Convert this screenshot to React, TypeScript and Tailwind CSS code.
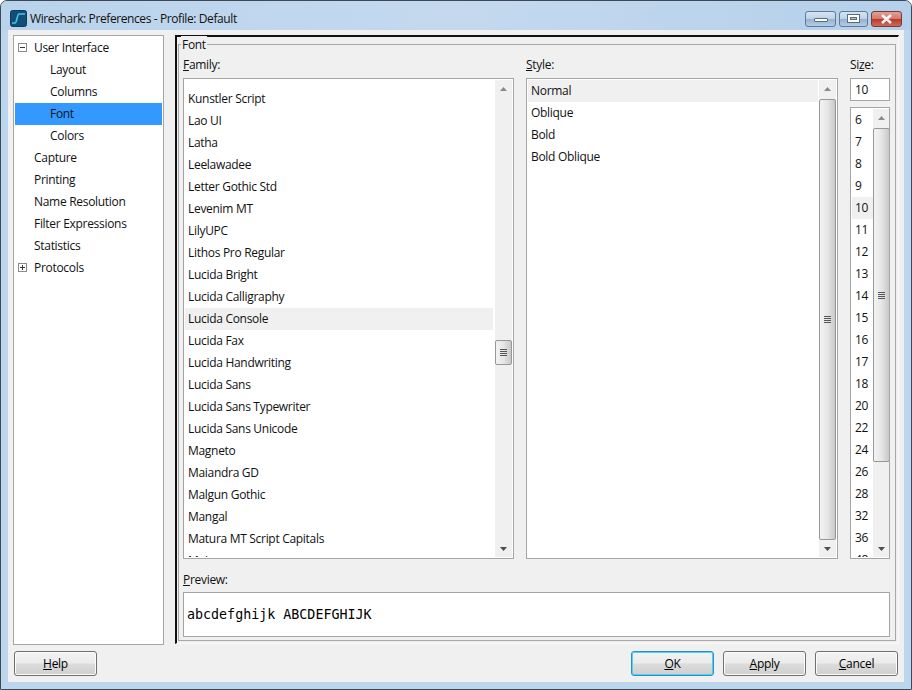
import type { ReactNode } from 'react';

const treeItems = [
  { label: 'User Interface', indent: 'pl-[19px]', box: 'minus' },
  { label: 'Layout', indent: 'pl-[35px]' },
  { label: 'Columns', indent: 'pl-[35px]' },
  { label: 'Font', indent: 'pl-[35px]', active: true },
  { label: 'Colors', indent: 'pl-[35px]' },
  { label: 'Capture', indent: 'pl-[19px]' },
  { label: 'Printing', indent: 'pl-[19px]' },
  { label: 'Name Resolution', indent: 'pl-[19px]' },
  { label: 'Filter Expressions', indent: 'pl-[19px]' },
  { label: 'Statistics', indent: 'pl-[19px]' },
  { label: 'Protocols', indent: 'pl-[19px]', box: 'plus' },
];

const families = [
  'Kunstler Script', 'Lao UI', 'Latha', 'Leelawadee', 'Letter Gothic Std', 'Levenim MT', 'LilyUPC',
  'Lithos Pro Regular', 'Lucida Bright', 'Lucida Calligraphy', 'Lucida Console', 'Lucida Fax',
  'Lucida Handwriting', 'Lucida Sans', 'Lucida Sans Typewriter', 'Lucida Sans Unicode', 'Magneto',
  'Maiandra GD', 'Malgun Gothic', 'Mangal', 'Matura MT Script Capitals', 'Meiryo',
];

const styles = ['Normal', 'Oblique', 'Bold', 'Bold Oblique'];
const sizes = ['6', '7', '8', '9', '10', '11', '12', '13', '14', '15', '16', '17', '18', '20', '22', '24', '26', '28', '32', '36', '48'];

const Grip = () => (
  <svg width="7" height="7" viewBox="0 0 7 7">
    <path d="M0 .5h7M0 2.5h7M0 4.5h7M0 6.5h7" stroke="#555" strokeWidth="1" />
  </svg>
);

// fake Win7 scrollbar, heights are the blank space above the thumb and the thumb itself
const Scrollbar = ({ before, thumb }: { before: string; thumb: string }) => (
  <div className="flex h-full w-[17px] shrink-0 flex-col bg-[#f0f0f0]">
    <div className="flex h-[17px] shrink-0 items-center justify-center">
      <svg width="7" height="4" viewBox="0 0 7 4"><path d="M3.5 0L7 4H0z" fill="#8a8a8a" /></svg>
    </div>
    <div className={`shrink-0 ${before}`} />
    <div className={`flex shrink-0 items-center justify-center rounded-[2px] border border-[#979797] bg-gradient-to-r from-[#f3f3f3] via-[#e6e6e6] to-[#c8c8cc] ${thumb}`}>
      <Grip />
    </div>
    <div className="flex-1" />
    <div className="flex h-[17px] shrink-0 items-center justify-center">
      <svg width="7" height="4" viewBox="0 0 7 4"><path d="M3.5 4L7 0H0z" fill="#4d4d4d" /></svg>
    </div>
  </div>
);

const ListBox = ({ className, children }: { className: string; children: ReactNode }) => (
  <div className={`flex overflow-hidden border border-[#a5a5a5] bg-white p-px ${className}`}>{children}</div>
);

const Row = ({ label, active, className = '' }: { label: string; active?: boolean; className?: string }) => (
  <div className={`flex h-[22px] shrink-0 items-center whitespace-nowrap ${active ? 'bg-[#f0f0f0]' : ''} ${className}`}>{label}</div>
);

const Button = ({ mark, rest, primary, className = '' }: { mark: string; rest: string; primary?: boolean; className?: string }) => (
  <button
    className={`h-[25px] w-[83px] rounded-[3px] border bg-[linear-gradient(#f3f3f3_0%,#ebebeb_48%,#dcdcdc_52%,#cfcfcf_100%)] text-[12px] text-black ${
      primary ? 'border-[#2f8fc4] shadow-[inset_0_0_0_1px_#4fd0f5]' : 'border-[#707070] shadow-[inset_0_0_0_1px_#fbfbfb]'
    } ${className}`}
  >
    <u>{mark}</u>
    {rest}
  </button>
);

const CaptionButton = ({ className, children }: { className: string; children: ReactNode }) => (
  <div className={`flex h-[16px] items-center justify-center rounded-[3px] border border-[#5b7a9c] ${className}`}>{children}</div>
);

export default function App() {
  return (
    <div
      className="flex h-[690px] w-[912px] flex-col overflow-hidden rounded-t-[7px] border border-[#3c4a58] bg-[#bcd6ee] px-[7px] pb-[7px] text-[12px] tracking-[-0.3px] text-[#111]"
      style={{ fontFamily: '"Open Sans", "Noto Sans", sans-serif' }}
    >
      {/* Title bar */}
      <div className="-mx-[7px] flex h-[29px] shrink-0 items-center bg-gradient-to-r from-[#b9d3ec] via-[#c4d9ee] to-[#b5d0ea] pl-[9px] pr-[9px] pt-[6px]">
        <svg width="17" height="17" viewBox="0 0 17 17">
          <rect x="0.5" y="0.5" width="16" height="16" rx="2" fill="#0f4f78" stroke="#123a57" />
          <path d="M2 13h3c2 0 2-9 4-9h6" fill="none" stroke="#4cc4ea" strokeWidth="1.6" />
        </svg>
        <span className="ml-[3px] text-[12px] tracking-[-0.4px] text-[#111]">Wireshark: Preferences - Profile: Default</span>
        <div className="ml-auto flex gap-[3px]">
          <CaptionButton className="w-[31px] bg-[linear-gradient(#d6e4f1_0%,#bfd3e7_48%,#94b2d1_52%,#b5cde3_100%)]">
            <div className="mt-[3px] h-[4px] w-[14px] rounded-[1px] border border-[#596b7e] bg-white" />
          </CaptionButton>
          <CaptionButton className="w-[29px] bg-[linear-gradient(#d6e4f1_0%,#bfd3e7_48%,#94b2d1_52%,#b5cde3_100%)]">
            <div className="flex h-[9px] w-[13px] items-center justify-center border border-[#596b7e] bg-white">
              <div className="h-[3px] w-[7px] border border-[#596b7e] bg-[#a9c0d6]" />
            </div>
          </CaptionButton>
          <CaptionButton className="w-[31px] border-[#7a3a34] bg-[linear-gradient(#e3a096_0%,#d2796c_48%,#b8392c_52%,#d06a5c_100%)]">
            <svg width="15" height="10" viewBox="0 0 15 10">
              <path d="M3 1l9 8M12 1l-9 8" stroke="#f5f5f5" strokeWidth="2.6" />
            </svg>
          </CaptionButton>
        </div>
      </div>

      {/* Client area */}
      <div className="flex min-h-0 flex-1 flex-col bg-[#f0f0f0] px-[5px] pt-[5px]">
        <div className="flex h-[610px] shrink-0">
          {/* Tree */}
          <div className="h-full w-[151px] shrink-0 border border-[#a5a5a5] bg-white p-px">
            {treeItems.map((item) => (
              <div key={item.label} className={`relative flex h-[22px] items-center ${item.indent} ${item.active ? 'bg-[#3399ff]' : ''}`}>
                {item.box && (
                  <svg width="9" height="9" viewBox="0 0 9 9" className="absolute left-[3px] top-[6px]">
                    <rect x="0.5" y="0.5" width="8" height="8" fill="#fff" stroke="#8a8a8a" />
                    <path d={item.box === 'plus' ? 'M2 4.5h5M4.5 2v5' : 'M2 4.5h5'} stroke="#333" />
                  </svg>
                )}
                {item.label}
              </div>
            ))}
          </div>

          {/* Page frame */}
          <div className="ml-[11px] flex h-[609px] flex-1 border-l-2 border-t-2 border-[#111] border-b border-b-[#fafafa] border-r border-r-[#fafafa] pl-px pt-[7px] pr-[2px]">
            <div className="flex h-[597px] flex-1 flex-col border border-[#a8a8a8] pl-[4px] pr-[5px]">
              <div className="-mt-[9px] ml-[-2px] w-fit bg-[#f0f0f0] px-[1px] leading-[17px]">Font</div>

              <div className="mt-[3px] flex h-[505px] gap-[12px]">
                <div className="flex w-[331px] flex-col">
                  <div className="h-[22px] leading-[18px]"><u>F</u>amily:</div>
                  <ListBox className="h-[481px]">
                    <div className="min-w-0 flex-1 overflow-hidden pr-[2px] pt-[8px]">
                      {families.map((f) => (
                        <Row key={f} label={f} active={f === 'Lucida Console'} className="pl-[3px]" />
                      ))}
                    </div>
                    <Scrollbar before="h-[243px]" thumb="h-[25px]" />
                  </ListBox>
                </div>

                <div className="flex w-[312px] flex-col">
                  <div className="h-[22px] leading-[18px]"><u>S</u>tyle:</div>
                  <ListBox className="h-[481px]">
                    <div className="min-w-0 flex-1 overflow-hidden pr-px">
                      {styles.map((s) => (
                        <Row key={s} label={s} active={s === 'Normal'} className="pl-[3px]" />
                      ))}
                    </div>
                    <Scrollbar before="h-[2px]" thumb="h-[441px]" />
                  </ListBox>
                </div>

                <div className="flex w-[40px] flex-col">
                  <div className="h-[22px] leading-[18px]">Si<u>z</u>e:</div>
                  <div className="flex h-[23px] items-center border border-[#a5a5a5] bg-white pl-[4px]">10</div>
                  <ListBox className="mt-[6px] h-[452px]">
                    <div className="w-[21px] shrink-0 overflow-hidden">
                      {sizes.map((s) => (
                        <Row key={s} label={s} active={s === '10'} className="pl-[3px]" />
                      ))}
                    </div>
                    <Scrollbar before="h-[2px]" thumb="h-[334px]" />
                  </ListBox>
                </div>
              </div>

              <div className="mt-[10px] h-[21px] leading-[18px]"><u>P</u>review:</div>
              <div
                className="flex h-[45px] items-center border border-[#a5a5a5] bg-white pl-[3px] text-[13.33px] tracking-normal text-black"
                style={{ fontFamily: '"DejaVu Sans Mono", monospace' }}
              >
                abcdefghijk ABCDEFGHIJK
              </div>
            </div>
          </div>
        </div>

        {/* Bottom buttons */}
        <div className="mt-[6px] flex pl-px">
          <Button mark="H" rest="elp" />
          <div className="ml-auto mr-[1px] flex gap-[9px]">
            <Button mark="O" rest="K" primary />
            <Button mark="A" rest="pply" />
            <Button mark="C" rest="ancel" />
          </div>
        </div>
      </div>
    </div>
  );
}
